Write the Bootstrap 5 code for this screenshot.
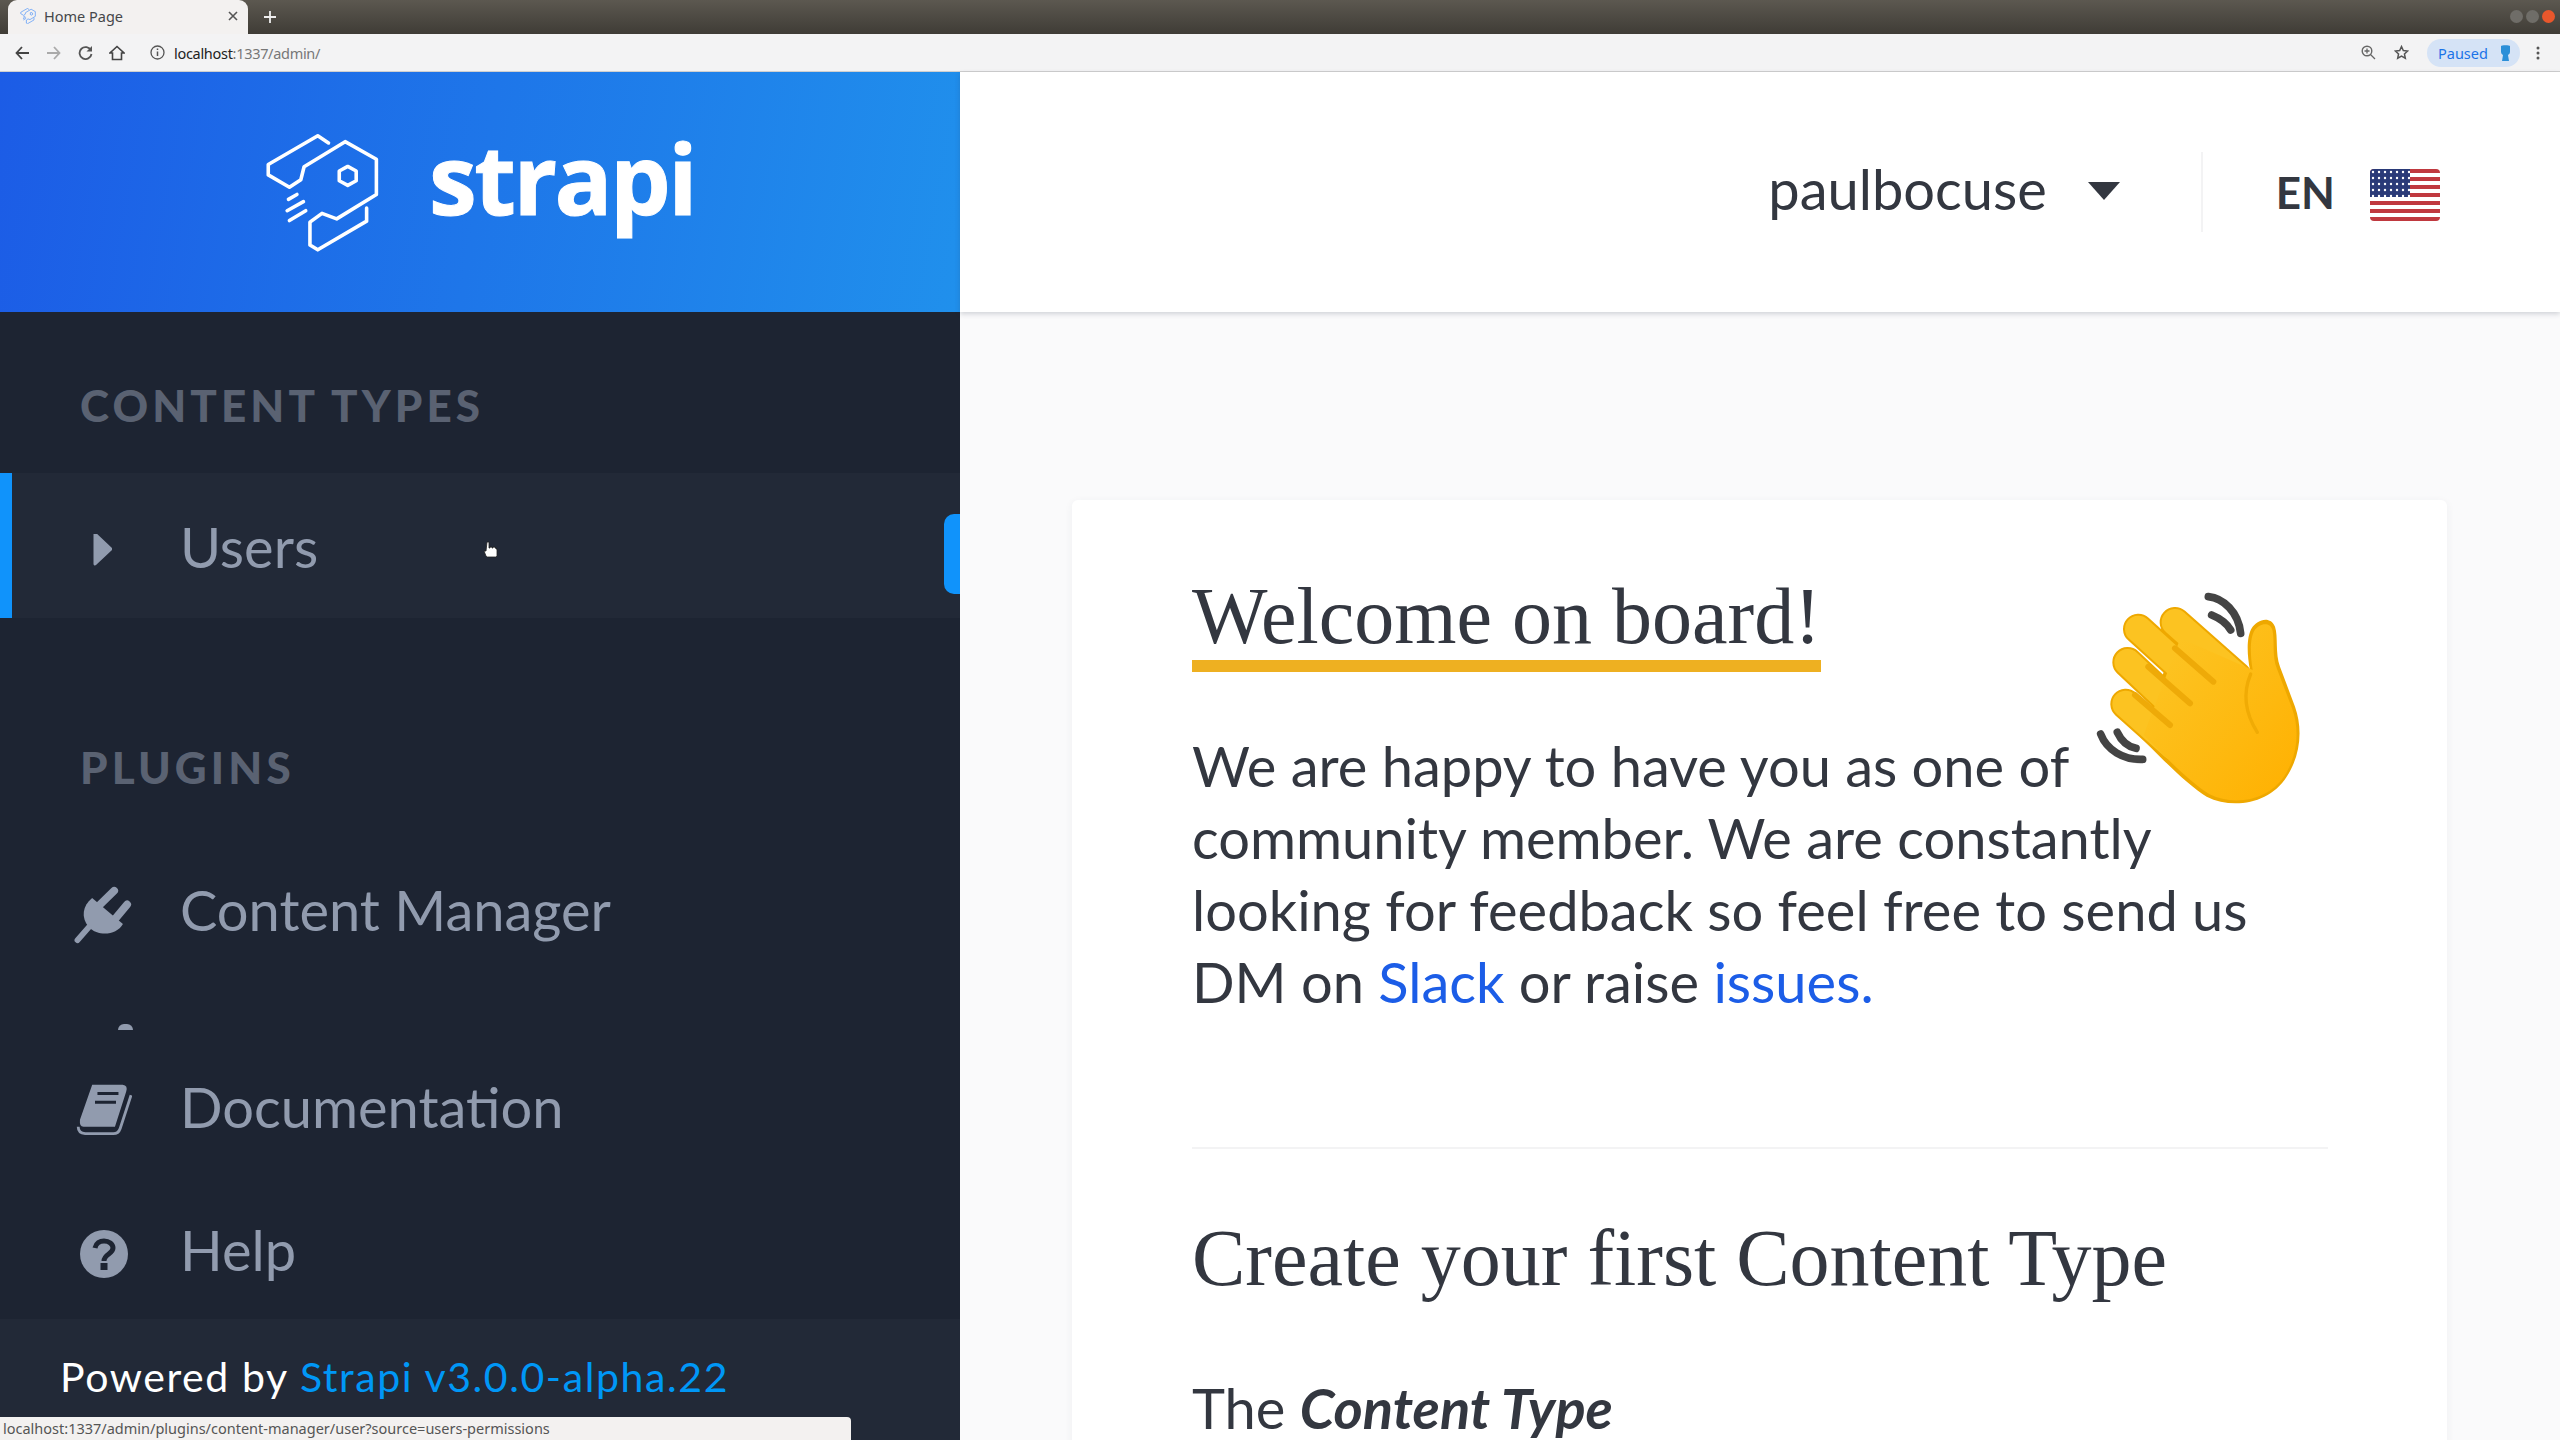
<!DOCTYPE html>
<html lang="en">
<head>
<meta charset="UTF-8">
<title>Home Page</title>
<link href="https://cdn.jsdelivr.net/npm/bootstrap@5.3.0/dist/css/bootstrap.min.css" rel="stylesheet">
<style>
html, body { height: 1440px; overflow: hidden; }
body { font-family: Lato, "Open Sans", sans-serif; color: #333740; background: #fafafb; }
.tabstrip { height: 34px; background: linear-gradient(#5c5850, #3f3c36); padding-left: 8px; }
.tabitem { width: 240px; height: 34px; background: #f3f1f0; border-radius: 9px 9px 0 0; padding: 0 10px 2px 12px; font: 14.5px "Noto Sans", sans-serif; color: #45474a; }
.plus-btn { margin-left: 14px; width: 16px; }
.win-btn { width: 13px; height: 13px; border-radius: 50%; background: #6f6d68; margin-top: -2px; }
.win-close { background: #e9572c; }
.win-group { margin-left: auto; gap: 3px; padding-right: 5px; }
.toolbar { height: 38px; background: #f3f3f4; border-bottom: 1px solid #cfcfcf; padding: 0 20px 0 15px; }
.urltext { font: 14.5px "Noto Sans", sans-serif; color: #777; letter-spacing: -.3px; }
.urltext b { font-weight: 400; color: #222; }
.paused-pill { width: 93px; height: 28px; border-radius: 14px; background: #d5e3f6; color: #1a73e8; font: 14.5px "Noto Sans", sans-serif; padding: 0 8px 0 11px; }
.app-wrap { height: 1368px; }
.side { width: 960px; flex: none; background: #1d2432; position: relative; }
.side-logo { height: 240px; background: linear-gradient(100deg, #1c5ce6, #2090ec); padding-left: 265px; }
.logo-word { font: 700 96px/1 "Open Sans", sans-serif; color: #fff; margin-left: 50px; margin-top: -28px; letter-spacing: -2.500px; -webkit-text-stroke: 1px #fff; }
.side-nav { height: 1007px; overflow: hidden; }
.side-label { font-weight: 900; font-size: 44px; letter-spacing: 4.100px; color: #5a6272; padding-left: 80px; line-height: 52px; }
.label-a { height: 161px; padding-top: 67px; }
.label-b { height: 220px; padding-top: 123px; }
.side-row { height: 143px; padding-left: 72px; font-size: 56px; color: #919bae; }
.row-on { height: 145px; background: #222937; border-left: 12px solid #1093fb; padding: 3px 0 0 60px; }
.row-ico { width: 64px; flex: none; margin-right: 44px; }
.row-up3 { margin-top: -3px; }
.row-up5 { margin-top: -5px; }
.row-gap { height: 54px; padding: 43px 0 0 118px; }
.tip-clip { width: 15px; height: 6px; border-radius: 8px 8px 0 0; background: #919bae; }
.side-handle { position: absolute; right: 0; top: 442px; width: 16px; height: 80px; background: #1093fb; border-radius: 10px 0 0 10px; }
.hand-cursor { position: absolute; left: 483px; top: 469px; }
.side-foot { height: 121px; background: #222937; padding: 27px 0 0 60px; font-size: 41px; color: #fff; letter-spacing: 1.600px; }
.side-foot span { color: #0097f6; }
.main-col { flex: 1; min-width: 0; }
.topbar { height: 240px; background: #fff; box-shadow: 0 2px 5px rgba(40,50,70,.2); position: relative; }
.user-name { font-size: 56px; margin: -6px 41px 0 0; }
.caret-dn { width: 0; height: 0; border-left: 16px solid transparent; border-right: 16px solid transparent; border-top: 18px solid #333740; margin: -3px 81px 0 0; }
.top-sep { width: 2px; height: 80px; background: #f3f3f4; margin-right: 73px; }
.lang-code { font-size: 44px; font-weight: 700; margin-right: 35px; }
.flag-box { margin: 6px 120px 0 0; }
.page-body { padding: 188px 0 0 112px; }
.welcome-card { width: 1375px; height: 1000px; background: #fff; border-radius: 6px; box-shadow: 0 2px 8px rgba(50,60,90,.06); padding: 72px 119px 0 120px; position: relative; }
.serif-title { font-family: "Liberation Serif", serif; font-weight: 400; font-size: 80px; line-height: 88px; margin: 0; color: #333740; }
.title-line { display: inline-block; border-bottom: 12px solid #eeb021; }
.intro-text { font-size: 56px; line-height: 72px; margin: 58px 0 0; }
.intro-text a { color: #1c5de7; text-decoration: none; }
.wave-hand { position: absolute; left: 988px; top: 70px; }
.card-rule { height: 2px; background: #f3f3f4; margin: 129px 0 65px; }
.sub-text { font-size: 56px; line-height: 72px; margin: 70px 0 0; }
.status-tip { position: absolute; left: 0; bottom: 0; width: 851px; height: 23px; background: #f3f1f0; border-radius: 0 4px 0 0; font: 14.5px/23px "Noto Sans", sans-serif; color: #555; padding-left: 3px; white-space: nowrap; }
</style>
</head>
<body class="position-relative">

<svg width="0" height="0" class="position-absolute">
  <symbol id="strapi-mark" viewBox="70 60 350 365">
    <g fill="none" stroke="currentColor" stroke-width="11" stroke-linejoin="round" stroke-linecap="round">
      <path d="M265 92 232 70 80 158v32l65 38 35-23 10-40 126-77 96 54v108l-122 75-45-17-37 27v70l24 15 150-88v-40"/>
      <path d="M324 164l26 14v30l-26 14-26-14v-30z"/>
      <path d="M142 265l26-15M138 300l50-28M145 330l50-30"/>
    </g>
  </symbol>
</svg>

<div class="tabstrip d-flex align-items-center">
  <div class="tabitem d-flex align-items-center">
    <svg width="16" height="16" class="text-primary me-2"><use href="#strapi-mark"/></svg>
    <span>Home Page</span>
    <svg class="ms-auto" width="10" height="10" viewBox="0 0 10 10"><path d="M1 1l8 8M9 1 1 9" stroke="#555" stroke-width="1.600"/></svg>
  </div>
  <svg class="plus-btn" width="14" height="14" viewBox="0 0 14 14"><path d="M7 1v12M1 7h12" stroke="#eee" stroke-width="1.800"/></svg>
  <div class="d-flex win-group">
    <div class="win-btn"></div><div class="win-btn"></div><div class="win-btn win-close"></div>
  </div>
</div>

<div class="toolbar d-flex align-items-center">
  <svg width="15" height="14" viewBox="0 0 15 14" class="me-3"><path d="M14 7H2M7 1 1.500 7 7 13" fill="none" stroke="#444" stroke-width="1.800"/></svg>
  <svg width="15" height="14" viewBox="0 0 15 14" class="me-3"><path d="M1 7h12M8 1l5.500 6L8 13" fill="none" stroke="#aaa" stroke-width="1.800"/></svg>
  <svg width="15" height="15" viewBox="0 0 15 15" class="me-3" style="margin-left:1px"><path d="M13 5.500A6 6 0 1 0 13.500 9" fill="none" stroke="#555" stroke-width="1.800"/><path d="M14 1v5.500H8.500z" fill="#555"/></svg>
  <svg width="16" height="16" viewBox="0 0 16 16"><path d="M8 1.500 1 8h2.500v6.500h9V8H15z" fill="none" stroke="#444" stroke-width="1.600"/></svg>
  <svg width="15" height="15" viewBox="0 0 15 15" style="margin:0 9px 0 25px"><circle cx="7.500" cy="7.500" r="6.500" fill="none" stroke="#555" stroke-width="1.300"/><path d="M7.500 6.500v4.500M7.500 3.500v1.600" stroke="#555" stroke-width="1.500"/></svg>
  <div class="urltext"><b>localhost</b>:1337/admin/</div>
  <svg class="ms-auto" width="15" height="15" viewBox="0 0 15 15" style="margin-right:18px"><circle cx="6" cy="6" r="4.800" fill="none" stroke="#666" stroke-width="1.400"/><path d="m9.500 9.500 4.500 4.500M6 3.500v5M3.500 6h5" stroke="#666" stroke-width="1.300"/></svg>
  <svg width="15" height="15" viewBox="0 0 24 24" style="margin-right:18px"><path d="M12 2.500l2.900 6.300 6.900.8-5.100 4.700 1.400 6.800-6.100-3.400-6.100 3.400 1.400-6.800L2.200 9.600l6.900-.8z" fill="none" stroke="#555" stroke-width="2.400"/></svg>
  <div class="paused-pill d-flex align-items-center justify-content-between">
    <span>Paused</span>
    <svg width="13" height="18" viewBox="0 0 13 18"><path d="M2 2c0-1 9-1 9 0v6q0 2-2 3l1 6H3l1-6Q2 10 2 8z" fill="#2b8fd8"/></svg>
  </div>
  <svg width="4" height="14" viewBox="0 0 4 14" class="ms-3"><circle cx="2" cy="2" r="1.500" fill="#555"/><circle cx="2" cy="7" r="1.500" fill="#555"/><circle cx="2" cy="12" r="1.500" fill="#555"/></svg>
</div>

<div class="app-wrap d-flex">
  <aside class="side">
    <div class="side-logo d-flex align-items-center">
      <svg width="114" height="120" class="text-white"><use href="#strapi-mark"/></svg>
      <div class="logo-word">strapi</div>
    </div>
    <div class="side-nav">
      <div class="side-label label-a">CONTENT TYPES</div>
      <div class="side-row row-on d-flex align-items-center">
        <div class="row-ico">
          <svg width="40" height="36" viewBox="0 3 40 36" class="row-up3"><path d="M23 3l16 15-16 15z" fill="#919bae" stroke="#919bae" stroke-width="3" stroke-linejoin="round"/></svg>
        </div>
        <span>Users</span>
      </div>
      <div class="side-label label-b">PLUGINS</div>
      <div class="side-row d-flex align-items-center">
        <div class="row-ico">
          <svg width="60" height="60" viewBox="68 60 185 185" class="row-up3">
            <path d="M150 125l48-47M195 172l43-52" stroke="#919bae" stroke-width="24" stroke-linecap="round"/>
            <path d="M130 100l95 80c-20 35-75 40-105 10-25-30-20-65 10-90z" fill="#919bae"/>
            <path d="M120 190l-35 40" stroke="#919bae" stroke-width="18" stroke-linecap="round"/>
          </svg>
        </div>
        <span>Content Manager</span>
      </div>
      <div class="row-gap"><div class="tip-clip"></div></div>
      <div class="side-row d-flex align-items-center">
        <div class="row-ico">
          <svg width="60" height="56" viewBox="68 668 170 160" class="row-up3">
            <path d="M125 670h87q16 2 10 20l-32 100h-90q-12 0-10-20z" fill="#919bae"/>
            <path d="M140 695h60M133 720h60" stroke="#1d2432" stroke-width="9"/>
            <path d="M236 700l-31 95q-5 15-20 15h-80q-20-2-20-20" fill="none" stroke="#919bae" stroke-width="8"/>
          </svg>
        </div>
        <span>Documentation</span>
      </div>
      <div class="side-row d-flex align-items-center">
        <div class="row-ico">
          <svg width="50" height="50" viewBox="0 0 50 50" class="row-up5" style="margin-left:7px">
            <circle cx="25" cy="25" r="24" fill="#919bae"/>
            <path d="M16 19c1-5 5-7 9-7 5 0 9 3 9 7 0 6-9 6-9 13" fill="none" stroke="#1d2432" stroke-width="5"/>
            <rect x="21.500" y="34" width="7" height="7" fill="#1d2432"/>
          </svg>
        </div>
        <span>Help</span>
      </div>
    </div>
    <div class="side-foot">Powered by <span>Strapi v3.0.0-alpha.22</span></div>
    <div class="side-handle"></div>
    <svg class="hand-cursor" width="15" height="17" viewBox="0 0 15 17"><path d="M4 1h2v6h1V6h2v1h1V6h2v1h1v1h1v7l-1 1H4l-1-1-2-5h2z" fill="#fff" stroke="#222" stroke-width=".8"/></svg>
  </aside>

  <main class="main-col">
    <div class="topbar d-flex align-items-center justify-content-end">
      <span class="user-name">paulbocuse</span>
      <div class="caret-dn"></div>
      <div class="top-sep"></div>
      <span class="lang-code">EN</span>
      <svg class="flag-box" width="70" height="52" viewBox="0 0 70 52">
        <defs>
          <pattern id="stars" width="6" height="6" patternUnits="userSpaceOnUse"><circle cx="3" cy="3" r="1.200" fill="#fff"/></pattern>
          <clipPath id="flagclip"><rect width="70" height="52" rx="4"/></clipPath>
        </defs>
        <g clip-path="url(#flagclip)">
          <rect width="70" height="52" fill="#fff"/>
          <path d="M0 2h70M0 10h70M0 18h70M0 26h70M0 34h70M0 42h70M0 50h70" stroke="#c0393f" stroke-width="4"/>
          <rect width="40" height="28" fill="#2a3a78"/>
          <rect width="40" height="28" fill="url(#stars)"/>
        </g>
      </svg>
    </div>
    <div class="page-body">
      <div class="welcome-card">
        <h1 class="serif-title"><span class="title-line">Welcome on board!</span></h1>
        <p class="intro-text">We are happy to have you as one of community member. We are constantly looking for feedback so feel free to send us DM on <a href="#">Slack</a> or raise <a href="#">issues.</a></p>
        <svg class="wave-hand" width="270" height="250" viewBox="0 0 810 750">
          <defs><linearGradient id="handfill" x1="0" y1="0" x2="1" y2="1"><stop offset="0" stop-color="#fcc728"/><stop offset="1" stop-color="#ffb000"/></linearGradient></defs>
          <g fill="none" stroke="#444" stroke-width="23" stroke-linecap="round">
            <path d="M445 80c45 5 90 45 97 110M455 135c25 10 45 25 57 45M122 492c18 48 68 78 126 76M172 487c13 28 33 43 56 48"/>
          </g>
          <g stroke="#eea800" stroke-linecap="round" fill="none">
            <path d="M345 157 530 320M235 177 420 345M203 277 360 425M197 402 340 530" stroke-width="92"/>
            <path d="M570 300c-10-50-10-100 5-125 15-25 55-40 70-5 10 30 0 80 15 120l45 120c25 70 15 150-25 210-50 80-160 100-240 60-40-25-90-70-140-120l-60-60 110-300z" fill="#eea800" stroke-width="0"/>
          </g>
          <path d="M345 157 530 320M235 177 420 345M203 277 360 425M197 402 340 530" stroke="#fcc321" stroke-width="80" stroke-linecap="round" fill="none"/>
          <path d="M578 300c-8-50-8-95 5-118 13-20 45-30 54-3 8 30-2 78 14 118l45 118c25 70 15 145-23 203-47 73-150 92-224 55-40-25-90-70-138-118l-60-60 110-290z" fill="url(#handfill)"/>
          <path d="M345 235l115 100M265 290l125 110M225 375l105 90" stroke="#eeaa08" stroke-width="18" stroke-linecap="round"/>
          <path d="M572 312c-25 60-15 120 20 175" fill="none" stroke="#f0ab05" stroke-width="10" stroke-linecap="round"/>
        </svg>
        <div class="card-rule"></div>
        <h2 class="serif-title">Create your first Content Type</h2>
        <p class="sub-text">The <b><i>Content Type</i></b></p>
      </div>
    </div>
  </main>
</div>

<div class="status-tip">localhost:1337/admin/plugins/content-manager/user?source=users-permissions</div>

<script src="https://cdn.jsdelivr.net/npm/bootstrap@5.3.0/dist/js/bootstrap.bundle.min.js"></script>
</body>
</html>
